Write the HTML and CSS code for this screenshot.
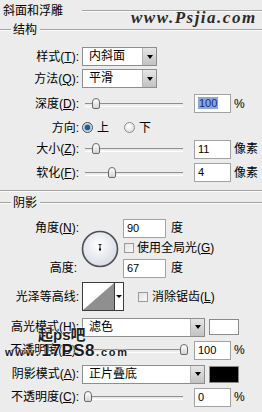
FILE: index.html
```html
<!DOCTYPE html>
<html lang="zh-CN">
<head>
<meta charset="utf-8">
<link rel="stylesheet" href="styles.css">
</head>
<body>
<div class="panel">
  <div class="title"><span>斜面和浮雕</span><i class="rule"></i></div>
  <div class="legend"><i class="rule lead"></i><span>结构</span><i class="rule"></i></div>

  <div class="row h-style"><span class="lbl">样式(<u>T</u>):</span><div class="select"><span>内斜面</span><b class="arrow"></b></div></div>
  <div class="row h-method"><span class="lbl">方法(<u>Q</u>):</span><div class="select"><span>平滑</span><b class="arrow"></b></div></div>
  <div class="row h-depth"><span class="lbl">深度(<u>D</u>):</span><div class="slider"><i class="thumb" style="left:7px"></i></div><div class="num"><em class="sel">100</em></div><span class="unit">%</span></div>
  <div class="row h-dir"><span class="lbl">方向:</span><i class="radio on"></i><span class="rtext">上</span><i class="radio"></i><span class="rtext">下</span></div>
  <div class="row h-size"><span class="lbl">大小(<u>Z</u>):</span><div class="slider"><i class="thumb" style="left:7px"></i></div><div class="num">11</div><span class="unit">像素</span></div>
  <div class="row h-soft"><span class="lbl">软化(<u>F</u>):</span><div class="slider"><i class="thumb" style="left:23px"></i></div><div class="num">4</div><span class="unit">像素</span></div>
  <div class="sep"></div>

  <div class="legend l2"><i class="rule lead"></i><span>阴影</span><i class="rule"></i></div>

  <div class="angle">
    <span class="lbl a1">角度(<u>N</u>):</span>
    <div class="dial">
      <svg width="38" height="38" viewBox="0 0 38 38">
        <defs><radialGradient id="g" cx="45%" cy="40%" r="60%"><stop offset="0" stop-color="#ffffff"/><stop offset="1" stop-color="#d9dce6"/></radialGradient></defs>
        <circle cx="19" cy="19" r="17.5" fill="url(#g)" stroke="#4d4f55" stroke-width="1.6"/>
        <path d="M19 19.5V14.5M17.5 14.5h3" stroke="#222" stroke-width="1" fill="none"/>
        <rect x="18" y="18.5" width="2" height="2" fill="#000"/>
      </svg>
    </div>
    <div class="a-r1"><div class="num">90</div><span class="unit">度</span></div>
    <div class="a-r2"><i class="check"></i><span>使用全局光(<u>G</u>)</span></div>
    <span class="lbl a3">高度:</span>
    <div class="a-r3"><div class="num">67</div><span class="unit">度</span></div>
  </div>

  <div class="row h-gloss"><span class="lbl">光泽等高线:</span>
    <div class="contour">
      <svg width="31" height="27" viewBox="0 0 31 27"><rect width="31" height="27" fill="#fff"/><path d="M0 27L31 0V27Z" fill="#8f8f8f"/></svg>
      <b class="carrow"></b>
    </div>
    <i class="check c2"></i><span>消除锯齿(<u>L</u>)</span>
  </div>

  <div class="row h-hmode"><span class="lbl">高光模式(<u>H</u>):</span><div class="select wide"><span>滤色</span><b class="arrow"></b></div><i class="swatch white"></i></div>
  <div class="row h-op1"><span class="lbl">不透明度(<u>O</u>):</span><div class="slider"><i class="thumb" style="left:95px"></i></div><div class="num">100</div><span class="unit">%</span></div>
  <div class="row h-smode"><span class="lbl">阴影模式(<u>A</u>):</span><div class="select wide"><span>正片叠底</span><b class="arrow"></b></div><i class="swatch black"></i></div>
  <div class="row h-op2"><span class="lbl">不透明度(<u>C</u>):</span><div class="slider"><i class="thumb" style="left:-1px"></i></div><div class="num">0</div><span class="unit">%</span></div>
</div>

<div class="wm-top">www.Psjia.com</div>
<div class="wm-qi">起ps吧</div>
<div class="wm-url"><small>www.</small><b>17PS8</b><small>.com</small></div>
</body>
</html>
```

FILE: styles.css
```css
* { box-sizing: border-box; margin: 0; padding: 0; }
html, body { background: #ececec; }
body {
  width: 262px;
  height: 412px;
  overflow: hidden;
  position: relative;
  font: 12px/1 "Liberation Sans", "Noto Sans CJK SC", sans-serif;
  color: #000;
}
u { text-decoration: underline; text-underline-offset: 1px; }

.title { height: 22px; display: flex; align-items: center; padding-left: 3px; }
.rule { display: block; flex: 1; height: 2px; border-top: 1px solid #a3a3a3; border-bottom: 1px solid #fbfbfb; }
.title .rule { margin-left: 19px; }

.legend { height: 16px; display: flex; align-items: center; }
.legend .lead { flex: 0 0 11px; }
.legend span { margin: 0 3px 0 2px; }
.l2 { margin-top: 3px; }

.row { display: flex; align-items: center; }
.lbl { width: 79px; flex: none; text-align: right; white-space: nowrap; }

.h-style { margin-top: 8px; height: 21px; }
.h-method { height: 23px; }
.h-depth { height: 27px; }
.h-dir { height: 21px; }
.h-size { height: 22px; }
.h-soft { height: 25px; }
.sep { margin-top: 5px; height: 2px; border-top: 1px solid #a3a3a3; border-bottom: 1px solid #fbfbfb; }

.select {
  margin-left: 3px; width: 75px; height: 19px;
  background: #fff; border: 1px solid #8e8e8e;
  display: flex;
}
.select.wide { width: 123px; }
.select span { flex: 1; padding-left: 6px; line-height: 17px; }
.arrow {
  width: 14px; flex: none;
  background: linear-gradient(#e6e6e6, #c2c2c2);
  border-left: 1px solid #b4b4b4;
  display: flex; align-items: center; justify-content: center;
}
.arrow::after { content: ""; border-left: 3px solid transparent; border-right: 3px solid transparent; border-top: 4px solid #000; }

.slider { position: relative; margin-left: 6px; width: 98px; height: 12px; flex: none; }
.slider::before { content: ""; position: absolute; left: 0; right: 0; top: 5px; height: 2px; border-top: 1px solid #8e8e8e; border-bottom: 1px solid #fff; }
.thumb {
  position: absolute; top: 0; width: 8px; height: 11px;
  border: 1px solid #6a6a6a; border-radius: 4px 4px 2px 2px;
  background: linear-gradient(#ffffff, #d4d4d4);
}

.num {
  margin-left: 11px; width: 37px; height: 19px; flex: none;
  background: #fff; border: 1px solid #a2a2a2;
  padding-left: 3px; line-height: 17px; font-size: 11px;
}
.sel { font-style: normal; background: #8aa6dc; color: #1c2d6e; padding: 0 1px; }
.unit { margin-left: 3px; }

.radio {
  width: 11px; height: 11px; border-radius: 50%; flex: none;
  border: 1px solid #8d8d8d; background: radial-gradient(circle at 40% 35%, #fff, #d7d7d7);
}
.radio.on { margin-left: 3px; border-color: #3a4a5c; background: radial-gradient(circle, #1f5f86 0 2.5px, #9ab7cd 3px, #e9eef3 4.5px); }
.radio + .rtext { margin-left: 4px; }
.rtext + .radio { margin-left: 15px; }

.angle {
  margin-top: 7px;
  display: grid;
  grid-template-columns: 79px 44px 1fr;
  grid-template-rows: 20px 20px 20px;
  align-items: center;
}
.a1 { grid-column: 1; grid-row: 1; }
.a3 { grid-column: 1; grid-row: 3; width: 77px; }
.dial { grid-column: 2; grid-row: 1 / 4; align-self: center; margin-left: 2px; margin-top: 1px; height: 38px; }
.dial svg { display: block; }
.a-r1, .a-r2, .a-r3 { grid-column: 3; display: flex; align-items: center; }
.a-r1 { grid-row: 1; }
.a-r2 { grid-row: 2; }
.a-r3 { grid-row: 3; }
.angle .num { margin-left: 0; width: 43px; }
.angle .unit { margin-left: 5px; }
.a-r2 .check { margin-left: 1px; margin-right: 3px; }

.check { width: 10px; height: 10px; flex: none; border: 1px solid #9a9a9a; background: linear-gradient(135deg, #e2e2e2, #fafafa); }

.h-gloss { margin-top: 4px; height: 29px; }
.contour {
  margin-left: 3px; width: 42px; height: 29px; flex: none;
  border: 1px solid #3c3c3c; background: #fff; display: flex;
}
.contour svg { display: block; }
.carrow { flex: 1; border-left: 1px solid #3c3c3c; display: flex; align-items: center; justify-content: center; }
.carrow::after { content: ""; border-left: 3px solid transparent; border-right: 3px solid transparent; border-top: 3px solid #000; }
.c2 { margin-left: 14px; margin-right: 4px; }

.h-hmode { margin-top: 5px; height: 22px; }
.h-op1 { height: 24px; }
.h-smode { height: 24px; }
.h-op2 { height: 22px; }
.swatch { margin-left: 4px; width: 30px; height: 16px; flex: none; border: 1px solid #8a8a8a; }
.swatch.white { background: #fff; }
.swatch.black { background: #000; height: 17px; }

.wm-top {
  position: absolute; left: 131px; top: 9px;
  font: italic 700 17px/1 "Liberation Serif", serif;
  letter-spacing: 1.5px; color: #2a2a2a;
}
.wm-qi {
  position: absolute; left: 38px; top: 327px;
  font: 700 15px/1 "Liberation Sans", "Noto Sans CJK SC", sans-serif;
  color: #222; text-shadow: 0 0 2px #fff, 0 0 1px #fff;
}
.wm-url {
  position: absolute; left: 5px; top: 342px;
  font: 700 17px/1 "Liberation Sans", sans-serif; color: #1a1a1a;
  text-shadow: 0 0 2px #fff, 0 0 1px #fff;
  display: flex; align-items: baseline;
}
.wm-url b { letter-spacing: 0.5px; margin: 0 1px; }
.wm-url small { font-size: 11px; font-weight: 700; letter-spacing: 1.8px; }
```
